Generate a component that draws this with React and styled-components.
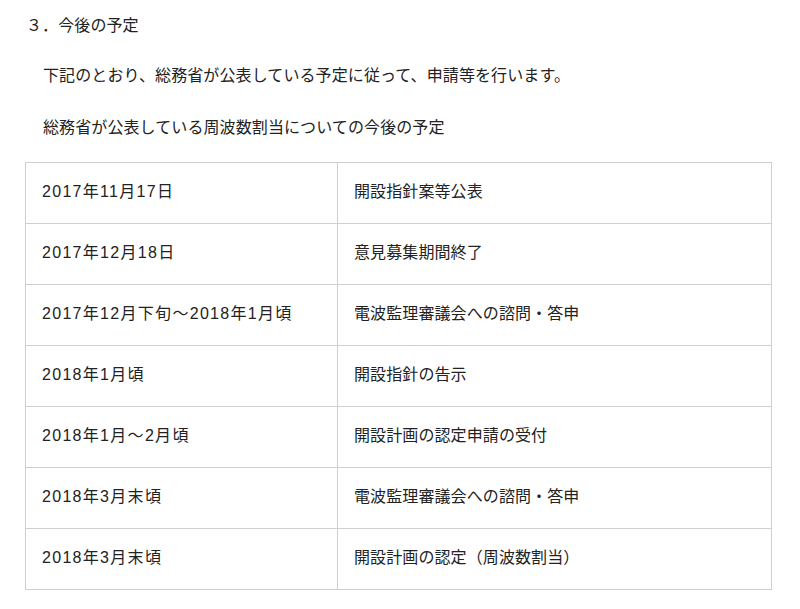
import React from 'react'
import styled, { createGlobalStyle } from "styled-components";

const GlobalStyle = createGlobalStyle`
  html, body {
    margin: 0;
    padding: 0;
    background: #fff;
  }
  body {
    font-family: "Liberation Sans", "Noto Sans CJK JP", sans-serif;
    color: #222;
  }
`;

const schedule = [
  ["2017年11月17日", "開設指針案等公表"],
  ["2017年12月18日", "意見募集期間終了"],
  ["2017年12月下旬～2018年1月頃", "電波監理審議会への諮問・答申"],
  ["2018年1月頃", "開設指針の告示"],
  ["2018年1月～2月頃", "開設計画の認定申請の受付"],
  ["2018年3月末頃", "電波監理審議会への諮問・答申"],
  ["2018年3月末頃", "開設計画の認定（周波数割当）"],
];

const App = () => {
  return (
    <Page>
      <GlobalStyle />
      <Heading>３．今後の予定</Heading>
      <Para>下記のとおり、総務省が公表している予定に従って、申請等を行います。</Para>
      <Para>総務省が公表している周波数割当についての今後の予定</Para>
      <Table>
        <tbody>
          {schedule.map(([when, what], i) => (
            <Row key={i}>
              <DateCell>{when}</DateCell>
              <Cell>{what}</Cell>
            </Row>
          ))}
        </tbody>
      </Table>
    </Page>
  );
};

export default App;

const Page = styled.div`
  width: 800px;
  height: 609px;
  padding: 15px 0 0 25px;
  box-sizing: border-box;
  font-size: 16px;
  letter-spacing: 0.1px;
  line-height: 22px;
`;

const Heading = styled.h3`
  margin: 0 0 0 1px;
  font-size: 16px;
  font-weight: normal;
`;

const Para = styled.p`
  margin: 30px 0 0 18px;
  &:first-of-type {
    margin-top: 28px;
  }
`;

const Table = styled.table`
  margin-top: 23px;
  width: 747px;
  border-collapse: collapse;
`;

const Row = styled.tr`
  height: 61px;
`;

const Cell = styled.td`
  border: 1px solid #cfcfcf;
  padding: 0 16px 3px;
  vertical-align: middle;
`;

const DateCell = styled(Cell)`
  width: 279px;
  letter-spacing: 1.3px;
`;
